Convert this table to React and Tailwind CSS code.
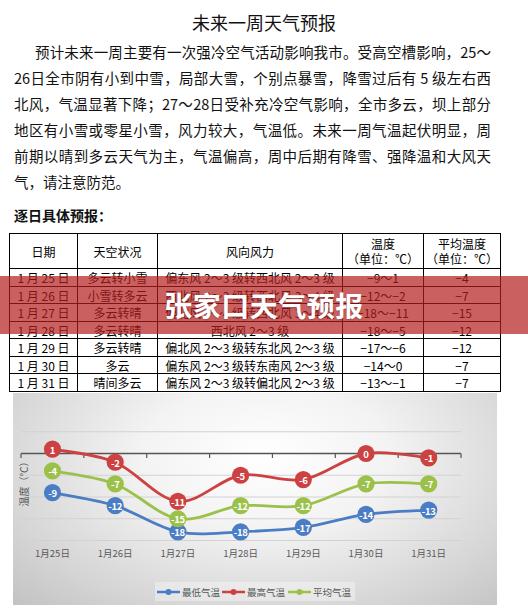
import React from 'react';

const FONT = '"Noto Sans CJK SC", "Noto Sans", sans-serif';

const days = ['1月25日', '1月26日', '1月27日', '1月28日', '1月29日', '1月30日', '1月31日'];
const low = [-9, -12, -18, -18, -17, -14, -13];
const high = [1, -2, -11, -5, -6, 0, -1];
const avg = [-4, -7, -15, -12, -12, -7, -7];

const rows = [
  ['1 月 25 日', '多云转小雪', '偏东风 2～3 级转西北风 2～3 级', '−9～1', '−4'],
  ['1 月 26 日', '小雪转多云', '西北风 2～3 级转西北风 3～4 级', '−12～−2', '−7'],
  ['1 月 27 日', '多云转晴', '偏北风 3～4 级转西北风 3～4 级', '−18～−11', '−15'],
  ['1 月 28 日', '多云转晴', '西北风 2～3 级', '−18～−5', '−12'],
  ['1 月 29 日', '多云转晴', '偏北风 2～3 级转东北风 2～3 级', '−17～−6', '−12'],
  ['1 月 30 日', '多云', '偏东风 2～3 级转东南风 2～3 级', '−14～0', '−7'],
  ['1 月 31 日', '晴间多云', '偏东风 2～3 级转偏北风 2～3 级', '−13～−1', '−7'],
];

const lines = [
  '预计未来一周主要有一次强冷空气活动影响我市。受高空槽影响，25～',
  '26日全市阴有小到中雪，局部大雪，个别点暴雪，降雪过后有 5 级左右西',
  '北风，气温显著下降；27～28日受补充冷空气影响，全市多云，坝上部分',
  '地区有小雪或零星小雪，风力较大，气温低。未来一周气温起伏明显，周',
  '前期以晴到多云天气为主，气温偏高，周中后期有降雪、强降温和大风天',
];

const xAt = (i) => 39.5 + i * 62.7;
const yAt = (v) => 60.5 - v * 4.35;

// catmull-rom -> bezier, roughly what excel does for smoothed lines
const smooth = (vals) => {
  const pts = vals.map((v, i) => [xAt(i), yAt(v)]);
  let d = `M${pts[0][0]},${pts[0][1]}`;
  for (let i = 0; i < pts.length - 1; i++) {
    const p0 = pts[i - 1] || pts[i];
    const p1 = pts[i];
    const p2 = pts[i + 1];
    const p3 = pts[i + 2] || p2;
    const c1x = p1[0] + (p2[0] - p0[0]) / 6;
    const c1y = p1[1] + (p2[1] - p0[1]) / 6;
    const c2x = p2[0] - (p3[0] - p1[0]) / 6;
    const c2y = p2[1] - (p3[1] - p1[1]) / 6;
    d += ` C${c1x},${c1y} ${c2x},${c2y} ${p2[0]},${p2[1]}`;
  }
  return d;
};

const series = [
  { vals: low, color: '#4a7dc4' },
  { vals: high, color: '#cc4242' },
  { vals: avg, color: '#9cc14b' },
];

const Chart = () => (
  <div className="ml-[13px] mt-px w-[484px] h-[212px] bg-[radial-gradient(ellipse_at_52%_30%,#ffffff_0%,#f3f3f3_35%,#d6d6d6_75%,#c2c2c2_100%)]">
    <svg width="484" height="212" viewBox="0 0 484 212" style={{ fontFamily: FONT }}>
      {[5, -5, -10, -15, -20].map((v) => (
        <line key={v} x1="8" x2="448" y1={yAt(v)} y2={yAt(v)} stroke="#d2d2d2" strokeWidth="1" />
      ))}
      <line x1="8" x2="448" y1={yAt(0)} y2={yAt(0)} stroke="#555" strokeWidth="1.5" />
      {Array.from({ length: 8 }).map((_, i) => (
        <line key={i} x1={8 + i * 62.86} x2={8 + i * 62.86} y1={yAt(0)} y2={yAt(0) + 4.5} stroke="#555" strokeWidth="1.2" />
      ))}
      <text x="10" y="88.5" transform="rotate(-90 10 88.5)" textAnchor="middle" dominantBaseline="central" fontSize="10" fill="#595959">温度（℃）</text>

      {series.map((s) => (
        <path key={s.color} d={smooth(s.vals)} fill="none" stroke={s.color} strokeWidth="2.8" strokeLinecap="round" />
      ))}
      {series.map((s) =>
        s.vals.map((v, i) => (
          <g key={s.color + i}>
            <circle cx={xAt(i)} cy={yAt(v)} r="8.6" fill={s.color} />
            <text x={xAt(i)} y={yAt(v) + 0.5} textAnchor="middle" dominantBaseline="central" fontSize="9.5" fontWeight="700" fill="#fff" letterSpacing="-0.3">{v}</text>
          </g>
        ))
      )}

      {days.map((d, i) => (
        <text key={d} x={xAt(i)} y="160" textAnchor="middle" dominantBaseline="central" fontSize="9.5" fill="#595959">{d}</text>
      ))}

      <rect x="142" y="189" width="200" height="19" fill="#ffffff" opacity="0.35" />
      {[
        { c: '#4a7dc4', x: 144, t: '最低气温' },
        { c: '#cc4242', x: 209, t: '最高气温' },
        { c: '#9cc14b', x: 275, t: '平均气温' },
      ].map((l) => (
        <g key={l.t}>
          <line x1={l.x} x2={l.x + 23} y1="199" y2="199" stroke={l.c} strokeWidth="2.5" />
          <circle cx={l.x + 11.5} cy="199" r="3" fill={l.c} />
          <text x={l.x + 25} y="199" dominantBaseline="central" fontSize="9.5" fill="#595959">{l.t}</text>
        </g>
      ))}
    </svg>
  </div>
);

const App = () => {
  return (
    <div className="relative w-[528px] h-[611px] overflow-hidden bg-white text-[#111]" style={{ fontFamily: FONT }}>
      <h1 className="pt-[10px] h-[34px] text-center text-[18px] leading-[24px] font-normal">未来一周天气预报</h1>

      <div className="mt-[5px] ml-[14px] w-[477px] text-[14.5px] leading-[26px]">
        {lines.map((l, i) => (
          <div key={i} className={`text-justify [text-align-last:justify] whitespace-nowrap ${i === 0 ? 'pl-[21px]' : ''}`}>{l}</div>
        ))}
        <div>气，请注意防范。</div>
      </div>

      <div className="mt-[10px] ml-[14px] text-[14px] leading-[20px] font-bold">逐日具体预报：</div>

      <table className="mt-[8px] ml-[9px] w-[491px] table-fixed border-collapse text-[12px] text-black">
        <colgroup>
          <col className="w-[68px]" />
          <col className="w-[80px]" />
          <col className="w-[185px]" />
          <col className="w-[81px]" />
          <col className="w-[77px]" />
        </colgroup>
        <thead>
          <tr className="h-[35px]">
            <th className="border border-black font-normal leading-[15px]">日期</th>
            <th className="border border-black font-normal leading-[15px]">天空状况</th>
            <th className="border border-black font-normal leading-[15px]">风向风力</th>
            <th className="border border-black font-normal leading-[15px]">温度<br />（单位：℃）</th>
            <th className="border border-black font-normal leading-[15px]">平均温度<br />（单位：℃）</th>
          </tr>
        </thead>
        <tbody>
          {rows.map((r, i) => (
            <tr key={i} className={i % 2 === 0 ? 'h-[18px]' : 'h-[17px]'}>
              {r.map((c, j) => (
                <td key={j} className="border border-black text-center leading-[15px] p-0 whitespace-nowrap">{c}</td>
              ))}
            </tr>
          ))}
        </tbody>
      </table>

      <Chart />

      <div className="absolute left-0 top-[276px] w-full h-[58px] bg-[rgba(180,30,28,0.7)] flex items-center justify-center">
        <span className="text-white text-[28px] font-bold tracking-[0.5px] [text-shadow:0_1px_2px_rgba(0,0,0,0.25)]">张家口天气预报</span>
      </div>
    </div>
  );
};

export default App;
